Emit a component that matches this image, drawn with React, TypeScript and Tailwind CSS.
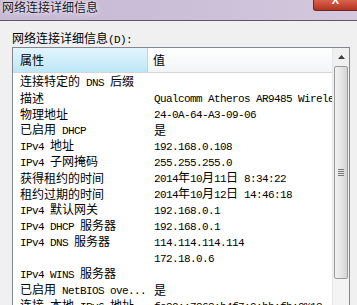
import React from "react";

const CJK = /([\u3000-\u9fff\uff00-\uffef]+)/;

// mixed text: CJK in Noto, latin in a narrow mono like the SimSun bitmap
function Mixed({ text }: { text: string }) {
  const parts = text.split(CJK).filter((p) => p !== "");
  return (
    <>
      {parts.map((p, i) =>
        CJK.test(p) ? (
          <span key={i} className="font-['Noto_Sans_CJK_SC',sans-serif] text-[12px] leading-[14px]">
            {p}
          </span>
        ) : (
          <span key={i} className="font-['Liberation_Mono',monospace] text-[11px] leading-[14px] tracking-[-0.6px]">
            {p}
          </span>
        )
      )}
    </>
  );
}

const rows: [string, string][] = [
  ["连接特定的 DNS 后缀", ""],
  ["描述", "Qualcomm Atheros AR9485 Wireless Network Adapter"],
  ["物理地址", "24-0A-64-A3-09-06"],
  ["已启用 DHCP", "是"],
  ["IPv4 地址", "192.168.0.108"],
  ["IPv4 子网掩码", "255.255.255.0"],
  ["获得租约的时间", "2014年10月11日 8:34:22"],
  ["租约过期的时间", "2014年10月12日 14:46:18"],
  ["IPv4 默认网关", "192.168.0.1"],
  ["IPv4 DHCP 服务器", "192.168.0.1"],
  ["IPv4 DNS 服务器", "114.114.114.114"],
  ["", "172.18.0.6"],
  ["IPv4 WINS 服务器", ""],
  ["已启用 NetBIOS ove...", "是"],
  ["连接-本地 IPv6 地址", "fe80::7868:b4f7:9:bb:fb:0%13"],
];

export default function App() {
  return (
    <div className="relative h-[305px] w-[357px] overflow-hidden bg-[#f0f0f0] text-black">
      {/* Title bar */}
      <div className="relative h-[21px] border-b border-[#5c5a68] bg-gradient-to-r from-[#c6b8d3] via-[#cbbfd8] to-[#d4c8de]">
        <div className="pl-[2px] leading-[14px] text-[12px] text-[#1a1a1a] font-['Noto_Sans_CJK_SC',sans-serif] [text-shadow:0_0_6px_#f4eef8,0_0_3px_#f4eef8]">
          网络连接详细信息
        </div>
        <div className="absolute right-0 top-0 flex h-[11px] w-[44px] items-start justify-center overflow-hidden rounded-bl-[3px] border-b border-l border-[#6b2a22] bg-gradient-to-b from-[#d9624c] to-[#b2321f]">
          <span className="-mt-[5px] text-[11px] font-bold leading-[11px] text-white font-['Liberation_Sans',sans-serif]">
            X
          </span>
        </div>
      </div>

      {/* Body */}
      <div className="pl-[12px] pt-[9px]">
        <div className="h-[17px] leading-[14px]">
          <Mixed text="网络连接详细信息(D):" />
        </div>

        <div className="flex h-[270px] w-[338px] border border-[#828790] bg-white">
          <div className="flex-1 overflow-hidden">
            {/* Header */}
            <div className="flex h-[25px] border-b border-[#d5d5d5]">
              <div className="flex w-[135px] items-center border-r border-[#a9dcf3] bg-gradient-to-b from-[#e3f5fd] to-[#bde7f9] pl-[7px]">
                <span className="font-['Noto_Sans_CJK_SC',sans-serif] text-[12px]">属性</span>
              </div>
              <div className="flex flex-1 items-center bg-gradient-to-b from-white to-[#f3f4f6] pl-[5px]">
                <span className="font-['Noto_Sans_CJK_SC',sans-serif] text-[12px]">值</span>
              </div>
            </div>
            {/* Rows */}
            {rows.map(([k, v], i) => (
              <div key={i} className="flex h-[16px] items-center whitespace-nowrap leading-[14px]">
                <div className="w-[135px] overflow-hidden pl-[7px]">
                  <Mixed text={k} />
                </div>
                <div className="flex-1 overflow-hidden pl-[6px]">
                  <Mixed text={v} />
                </div>
              </div>
            ))}
          </div>

          {/* Scrollbar */}
          <div className="flex w-[17px] flex-col border-l border-[#e8e8e8] bg-[#f0f0f0]">
            <div className="flex h-[18px] items-center justify-center">
              <svg width="7" height="4" viewBox="0 0 7 4">
                <path d="M0 4 L3.5 0 L7 4 Z" fill="#3c3c3c" />
              </svg>
            </div>
            <div className="mx-[1px] flex h-[213px] items-center justify-center rounded-[2px] border border-[#9a9a9a] bg-gradient-to-r from-[#f2f2f2] via-[#e6e6e6] to-[#d4d4d4]">
              <div className="flex flex-col gap-[1px]">
                <div className="h-px w-[6px] bg-[#777]" />
                <div className="h-px w-[6px] bg-[#777]" />
                <div className="h-px w-[6px] bg-[#777]" />
                <div className="h-px w-[6px] bg-[#777]" />
              </div>
            </div>
            <div className="flex-1 bg-[#f4f4f4]" />
          </div>
        </div>
      </div>
    </div>
  );
}
